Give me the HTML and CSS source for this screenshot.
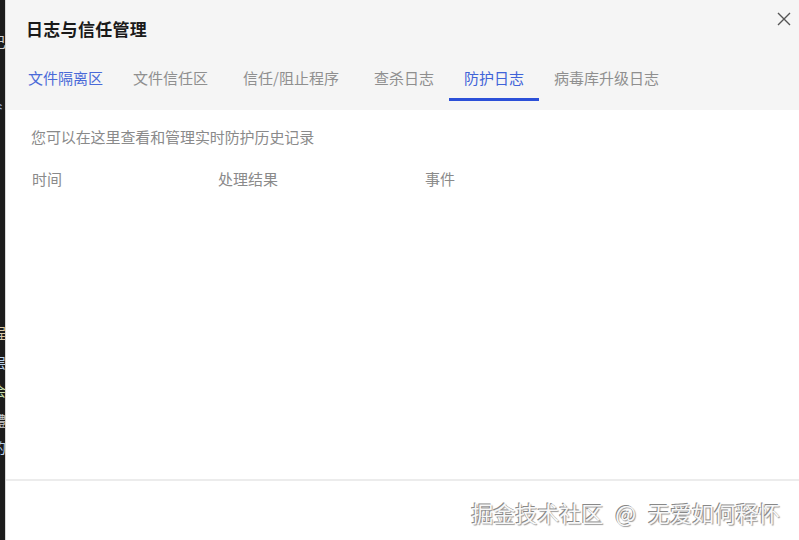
FILE: index.html
```html
<!DOCTYPE html>
<html lang="zh-CN">
<head>
<meta charset="utf-8">
<title>日志与信任管理</title>
<link rel="stylesheet" href="styles.css">
</head>
<body>
<div class="backdrop">
  <span class="frag f1">阝</span>
  <span class="frag f2">己</span>
  <span class="frag f3">⺀</span>
  <span class="frag f4">:</span>
  <span class="frag f5">程</span>
  <span class="frag f6">层</span>
  <span class="frag f7">会</span>
  <span class="frag f8">體</span>
  <span class="frag f9">的</span>
</div>
<div class="dialog">
  <header class="header">
    <h1 class="title">日志与信任管理</h1>
    <button class="close" aria-label="关闭">
      <svg width="14" height="14" viewBox="0 0 14 14"><path d="M1 1L13 13M13 1L1 13" stroke="#555" stroke-width="1.4" fill="none"/></svg>
    </button>
    <nav class="tabs">
      <span class="tab tab-active-first">文件隔离区</span>
      <span class="tab">文件信任区</span>
      <span class="tab tab-wide">信任/阻止程序</span>
      <span class="tab">查杀日志</span>
      <span class="tab active">防护日志</span>
      <span class="tab">病毒库升级日志</span>
    </nav>
  </header>
  <main class="content">
    <p class="desc">您可以在这里查看和管理实时防护历史记录</p>
    <div class="cols">
      <span>时间</span>
      <span>处理结果</span>
      <span>事件</span>
    </div>
  </main>
  <footer class="footer">
    <span class="watermark">掘金技术社区 @ 无爱如何释怀</span>
  </footer>
</div>
</body>
</html>
```
FILE: styles.css
```css
html, body {
  margin: 0;
  padding: 0;
  height: 100%;
}
body {
  display: flex;
  width: 799px;
  height: 540px;
  overflow: hidden;
  font-family: "Noto Sans CJK SC", "Noto Sans", sans-serif;
  background: #fff;
}
.backdrop {
  width: 5px;
  flex: none;
  background: #1c1c1c;
  border-right: 1px solid #d8d8d8;
  position: relative;
  overflow: hidden;
}
.frag {
  position: absolute;
  left: -8px;
  font-size: 14px;
  line-height: 14px;
  color: #cfcfcf;
}
.f1 { top: 8px; }
.f2 { top: 34px; }
.f3 { top: 100px; color: #9bb3e6; }
.f4 { top: 300px; }
.f5 { top: 325px; color: #d9c8a8; }
.f6 { top: 355px; color: #b9d0ea; }
.f7 { top: 383px; color: #c9e0b0; }
.f8 { top: 413px; }
.f9 { top: 440px; color: #b9d0ea; }
.dialog {
  flex: 1;
  display: flex;
  flex-direction: column;
  min-width: 0;
}
.header {
  position: relative;
  background: #f5f5f5;
  padding: 19px 0 9px 0;
}
.title {
  margin: 0 0 0 20px;
  font-size: 17px;
  line-height: 19px;
  font-weight: 700;
  color: #1a1a1a;
  letter-spacing: 0.3px;
}
.close {
  position: absolute;
  top: 11px;
  right: 7px;
  width: 16px;
  height: 16px;
  padding: 1px;
  border: 0;
  background: none;
}
.tabs {
  display: flex;
  margin-top: 30px;
  padding-left: 7px;
}
.tab {
  padding: 0 15px 10px;
  font-size: 15px;
  line-height: 20px;
  color: #8f8f8f;
  border-bottom: 3px solid transparent;
  white-space: nowrap;
}
.tab-wide {
  padding-left: 20px;
  padding-right: 20px;
}
.tab-active-first {
  color: #4a6ad8;
}
.tab.active {
  color: #3f63d8;
  border-bottom-color: #2c50d8;
}
.content {
  flex: 1;
  padding: 17px 0 0 25px;
}
.desc {
  margin: 0;
  font-size: 15px;
  line-height: 20px;
  color: #8a8a8a;
  letter-spacing: -0.1px;
}
.cols {
  display: grid;
  grid-template-columns: 186px 207px auto;
  margin-top: 22px;
  padding-left: 1px;
  font-size: 15px;
  line-height: 20px;
  color: #8a8a8a;
}
.footer {
  height: 61px;
  border-top: 2px solid #ececec;
  display: flex;
  justify-content: flex-end;
  padding: 16px 19px 0 0;
  box-sizing: border-box;
}
.watermark {
  font-size: 22px;
  line-height: 30px;
  height: 30px;
  color: #f8f8f8;
  word-spacing: 7px;
  text-shadow: -1px -1px 0 #888, 1px 1px 1px #999;
  white-space: nowrap;
}
```
